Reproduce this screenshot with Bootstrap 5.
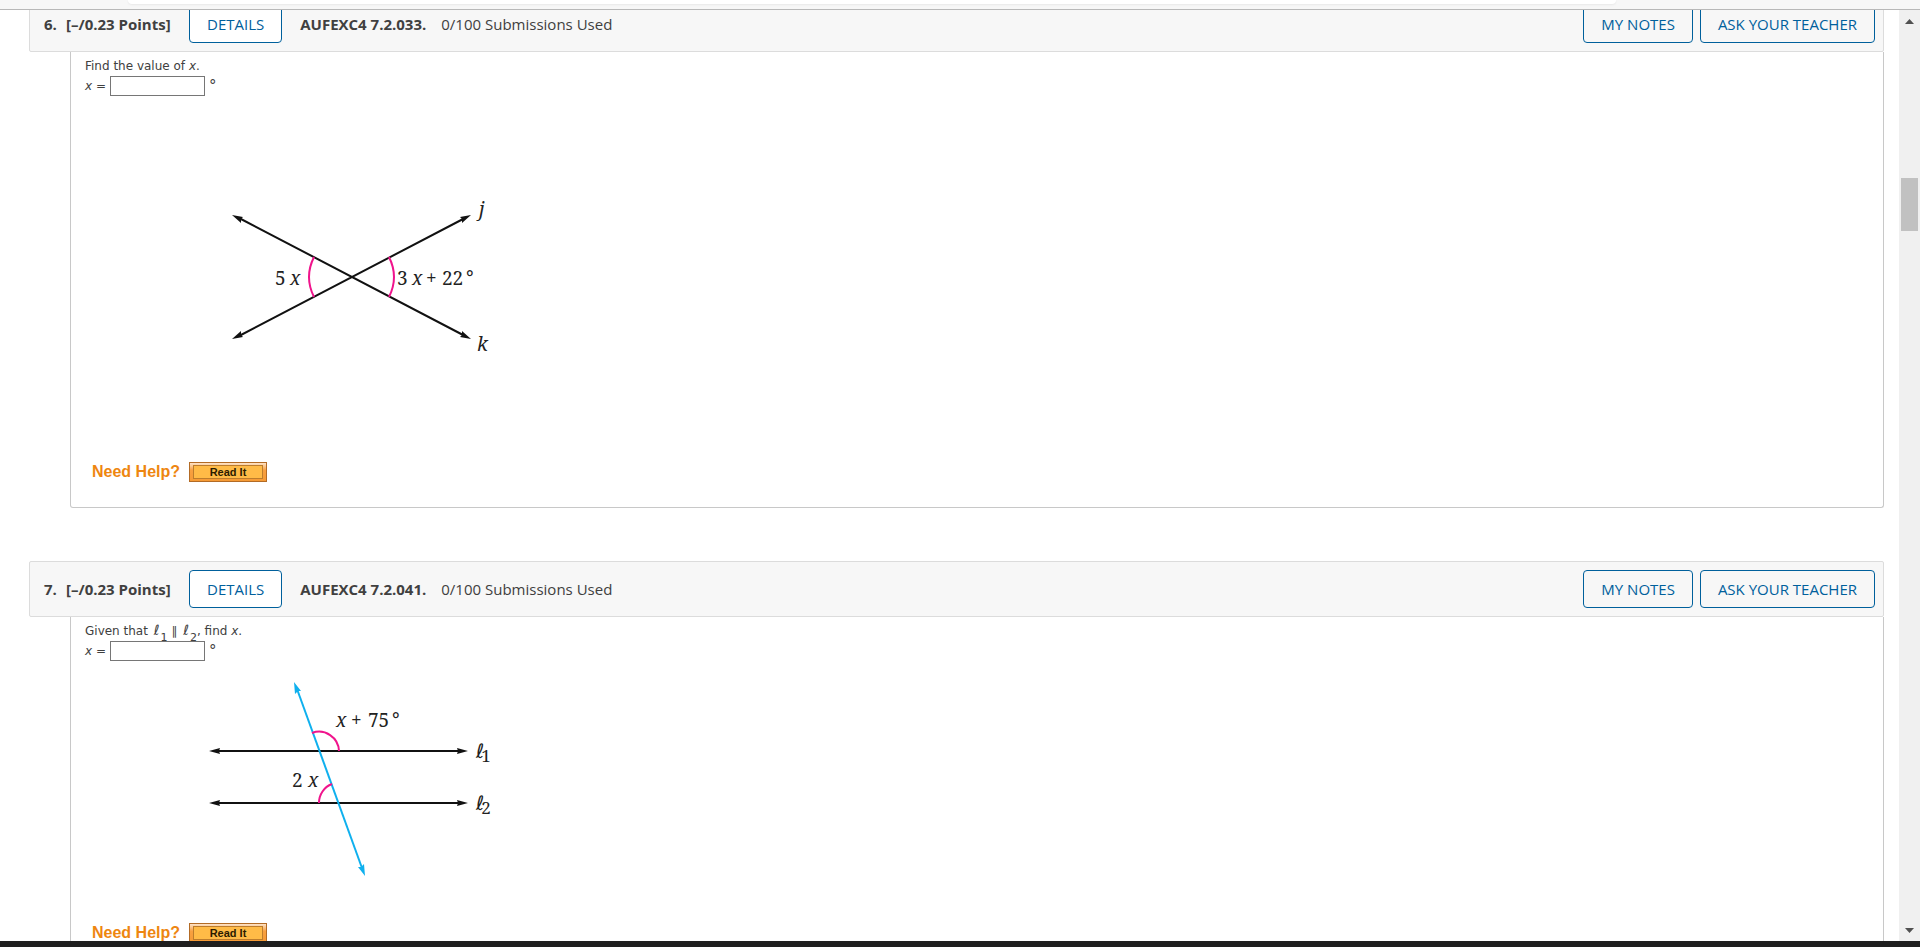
<!DOCTYPE html>
<html lang="en">
<head>
<meta charset="utf-8">
<meta name="viewport" content="width=device-width, initial-scale=1">
<title>Homework</title>
<link href="https://cdn.jsdelivr.net/npm/bootstrap@5.3.0/dist/css/bootstrap.min.css" rel="stylesheet">
<style>
  body { font-family: "Open Sans", sans-serif; font-size: 15px; color: #404040; background: #fff; }
  .browser-edge { height: 10px; background: #f7f7f7; border-bottom: 1px solid #b8b8b8; padding: 0 304px 0 128px; }
  .address-pill { height: 4px; background: #fff; border-radius: 0 0 16px 16px; box-shadow: 0 1px 2px #e8e8e8; }
  .question-list { margin-top: -14px; padding: 0 15px 0 29px; }
  .question { margin-bottom: 53px; }
  .question-head { height: 56px; background: #f7f7f7; border: 1px solid #dcdcdc; border-radius: 2px; padding: 0 8px 0 14px; white-space: nowrap; }
  .question-head h2 { font-size: 15px; line-height: 20px; font-weight: 700; margin: 0; }
  .question-no { width: 22px; }
  .points { width: 123px; }
  .question-head .code { margin: 0 15px 0 18px; }
  .btn-wa { --bs-btn-color: #00609c; --bs-btn-border-color: #00609c; --bs-btn-bg: #fff; --bs-btn-hover-color: #fff; --bs-btn-hover-bg: #00609c;
    --bs-btn-padding-x: 17px; --bs-btn-padding-y: 0; --bs-btn-border-radius: 4px; --bs-btn-font-size: 15px; --bs-btn-font-weight: 500; height: 38px; }
  .btn-plain { --bs-btn-bg: #f7f7f7; }
  .btn-notes { margin-right: 7px; }
  .question-body { margin-left: 41px; border: 1px solid #c8c8c8; border-top: 0; border-radius: 0 0 3px 3px; padding: 4px 14px 25px;
    font: 12px/20px "DejaVu Sans", sans-serif; }
  .prompt { height: 20px; white-space: nowrap; }
  .prompt sub { font-size: 11px; line-height: 0; bottom: -6px; margin-left: 1px; }
  .ell { font-size: 14px; line-height: 1; font-style: italic; margin-left: 2px; }
  .answer { width: 95px; height: 20px; border: 1px solid #767676; border-radius: 0; padding: 0 4px; margin: 0 4px; }
  .answer-row { height: 20px; }
  .degree { font-size: 15px; }
  .figure-box { display: block; margin-top: 4px; max-width: 100%; }
  .figure-box text { font-family: "Noto Serif", "Liberation Serif", serif; font-size: 19px; fill: #222; }
  .figure-box .ell-mark { font-family: "DejaVu Sans", sans-serif; font-size: 20px; font-style: italic; }
  .figure-box .ell-index { font-family: "Noto Serif", serif; font-size: 17px; font-style: normal; }
  .help { height: 21px; padding-left: 7px; font-family: "Liberation Sans", sans-serif; }
  .help-label { width: 97px; font-size: 16px; font-weight: 700; color: #ee8610; }
  .help-btn { width: 78px; height: 20px; padding: 2px 3px; border: 1px solid #b36b25; background: linear-gradient(#fde3c8, #f8a040 40%, #f59a35); }
  .help-btn span { display: block; border: 1px solid #bd7d2c; background: #ffbb47; color: #2c1c00; font-size: 11px; line-height: 12px; font-weight: 700; }
  .scroll-col { width: 21px; background: #f0f0f0; }
  .scroll-col svg { display: block; margin: 0 auto; }
  .scroll-before { flex: 144; }
  .scroll-thumb { flex: 53; margin: 0 2px; background: #c1c1c1; }
  .scroll-after { flex: 686; }
  .bottom-edge { height: 6px; background: #1f1f1f; }
</style>
</head>
<body>
<div class="vh-100 d-flex flex-column overflow-hidden">
  <div class="browser-edge flex-shrink-0"><div class="address-pill"></div></div>
  <div class="d-flex flex-grow-1 overflow-hidden">
    <main class="question-list flex-grow-1">

      <section class="question">
        <header class="question-head d-flex align-items-center">
          <h2 class="question-no">6.</h2>
          <h2 class="points">[–/0.23 Points]</h2>
          <button type="button" class="btn btn-wa">DETAILS</button>
          <h2 class="code">AUFEXC4 7.2.033.</h2>
          <span>0/100 Submissions Used</span>
          <button type="button" class="btn btn-wa btn-plain btn-notes ms-auto">MY NOTES</button>
          <button type="button" class="btn btn-wa btn-plain">ASK YOUR TEACHER</button>
        </header>
        <div class="question-body">
          <div class="prompt">Find the value of <i>x</i>.</div>
          <div class="answer-row d-flex"><label for="answer6"><i>x</i> =</label><input id="answer6" class="answer" type="text"><span class="degree">°</span></div>
          <svg class="figure-box" width="420" height="361" viewBox="85 100 420 361" role="img" aria-label="Lines j and k crossing">
            <path d="M239 218L465 336M239 336L465 218" stroke="#111" stroke-width="2"/>
            <path d="M232 215l11 2-2 2 0 4zM471 215l-11 2 2 2 0 4zM471 339l-11-2 2-2 0-4zM232 339l11-2-2-2 0-4z" fill="#111"/>
            <path d="M314 257Q304 277 314 297M389 257Q399 277 389 297" fill="none" stroke="#f0148c" stroke-width="2"/>
            <text x="275" y="285">5</text><text x="290" y="285" font-style="italic">x</text>
            <text x="397" y="285">3</text><text x="412" y="285" font-style="italic">x</text>
            <text x="426" y="285">+</text><text x="442" y="285">22</text><text x="466" y="285">°</text>
            <text x="479" y="216" font-style="italic">j</text>
            <text x="477" y="351" font-style="italic">k</text>
          </svg>
          <div class="help d-flex align-items-center"><span class="help-label">Need Help?</span><button type="button" class="help-btn"><span>Read It</span></button></div>
        </div>
      </section>

      <section class="question">
        <header class="question-head d-flex align-items-center">
          <h2 class="question-no">7.</h2>
          <h2 class="points">[–/0.23 Points]</h2>
          <button type="button" class="btn btn-wa">DETAILS</button>
          <h2 class="code">AUFEXC4 7.2.041.</h2>
          <span>0/100 Submissions Used</span>
          <button type="button" class="btn btn-wa btn-plain btn-notes ms-auto">MY NOTES</button>
          <button type="button" class="btn btn-wa btn-plain">ASK YOUR TEACHER</button>
        </header>
        <div class="question-body">
          <div class="prompt">Given that <span class="ell">ℓ</span><sub>1</sub> ∥ <span class="ell">ℓ</span><sub>2</sub>, find <i>x</i>.</div>
          <div class="answer-row d-flex"><label for="answer7"><i>x</i> =</label><input id="answer7" class="answer" type="text"><span class="degree">°</span></div>
          <svg class="figure-box" width="420" height="257" viewBox="85 665 420 257" role="img" aria-label="Two parallel lines cut by a transversal">
            <path d="M216 751H461M216 803H461" stroke="#111" stroke-width="2"/>
            <path d="M209 751l11-3-1 3 1 3zM468 751l-11-3 1 3-1 3zM209 803l11-3-1 3 1 3zM468 803l-11-3 1 3-1 3z" fill="#111"/>
            <path d="M297 689L362 868" stroke="#0fb0ee" stroke-width="2"/>
            <path d="M294 682l7 9-3 0-3 3zM365 876l-7-9 3 0 3-3z" fill="#0fb0ee"/>
            <path d="M312 733A20 20 0 0 1 339 751M319 803A20 20 0 0 1 332 784" fill="none" stroke="#f0148c" stroke-width="2"/>
            <text x="336" y="727" font-style="italic">x</text><text x="351" y="727">+</text><text x="368" y="727">75</text><text x="392" y="727">°</text>
            <text x="292" y="787">2</text><text x="308" y="787" font-style="italic">x</text>
            <text x="476" y="758" class="ell-mark">ℓ<tspan class="ell-index" dx="-3" dy="4">1</tspan></text>
            <text x="476" y="810" class="ell-mark">ℓ<tspan class="ell-index" dx="-3" dy="4">2</tspan></text>
          </svg>
          <div class="help d-flex align-items-center"><span class="help-label">Need Help?</span><button type="button" class="help-btn"><span>Read It</span></button></div>
        </div>
      </section>

    </main>
    <div class="scroll-col d-flex flex-column flex-shrink-0">
      <svg width="9" height="24" viewBox="0 0 9 24"><path d="M0 14L4.500 9 9 14z" fill="#505050"/></svg>
      <div class="scroll-before"></div>
      <div class="scroll-thumb"></div>
      <div class="scroll-after"></div>
      <svg width="9" height="24" viewBox="0 0 9 24"><path d="M0 11L4.500 16 9 11z" fill="#505050"/></svg>
    </div>
  </div>
  <div class="bottom-edge flex-shrink-0"></div>
</div>
<script src="https://cdn.jsdelivr.net/npm/bootstrap@5.3.0/dist/js/bootstrap.bundle.min.js"></script>
</body>
</html>
